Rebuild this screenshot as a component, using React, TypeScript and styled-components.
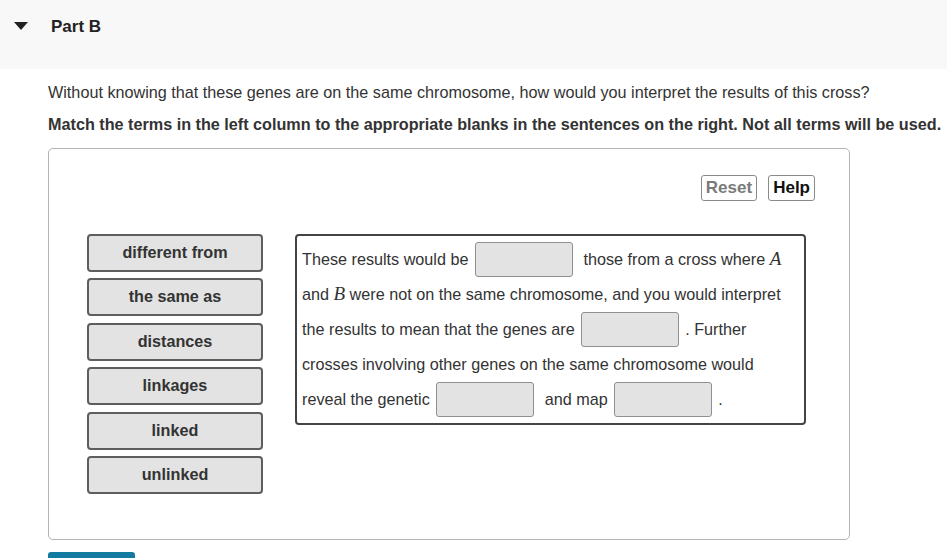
import React from "react";
import styled, { createGlobalStyle } from "styled-components";

const Global = createGlobalStyle`
  html, body { margin: 0; padding: 0; background: #fff; }
  body { font-family: "Liberation Sans", Arial, sans-serif; color: #333; }
`;

const Header = styled.div`
  height: 69px;
  background: #f8f8f8;
  display: flex;
  align-items: flex-start;
  padding-top: 17px;
  box-sizing: border-box;
`;

const Caret = styled.span`
  width: 0;
  height: 0;
  margin: 5px 0 0 14px;
  border-left: 7px solid transparent;
  border-right: 7px solid transparent;
  border-top: 8px solid #222;
`;

const PartTitle = styled.h2`
  margin: 0 0 0 23px;
  font-size: 17px;
  font-weight: bold;
  color: #222;
  line-height: 19px;
`;

const Body = styled.div`
  padding: 14px 0 0 48px;
`;

const Question = styled.p`
  margin: 0;
  font-size: 16.2px;
  line-height: 18px;
  color: #333;
`;

const Instruction = styled.p`
  margin: 14px 0 0;
  font-size: 16.2px;
  line-height: 18px;
  font-weight: bold;
  color: #333;
  white-space: nowrap;
`;

const Panel = styled.div`
  margin-top: 15px;
  width: 802px;
  height: 392px;
  box-sizing: border-box;
  border: 1px solid #b3b3b3;
  border-radius: 5px;
  padding: 26px 34px 0 38px;
`;

const Toolbar = styled.div`
  display: flex;
  justify-content: flex-end;
  gap: 11px;
`;

const ToolButton = styled.button<{ $disabled?: boolean }>`
  font-family: "Liberation Sans", Arial, sans-serif;
  font-size: 17px;
  font-weight: bold;
  height: 26px;
  padding: 0 4px;
  background: #fff;
  border: 1px solid #8a8a8a;
  border-radius: 3px;
  color: ${(p) => (p.$disabled ? "#7a7a7a" : "#111")};
`;

const Workspace = styled.div`
  margin-top: 33px;
  display: flex;
  align-items: flex-start;
  gap: 32px;
`;

const Terms = styled.div`
  display: flex;
  flex-direction: column;
  gap: 6.4px;
`;

const Term = styled.div`
  width: 176px;
  height: 38px;
  box-sizing: border-box;
  border: 2px solid #5e5e5e;
  border-radius: 4px;
  background: #e3e3e3;
  display: flex;
  align-items: center;
  justify-content: center;
  font-size: 16.2px;
  font-weight: bold;
  color: #333;
  padding-bottom: 1px;
`;

const Sentence = styled.div`
  width: 511px;
  box-sizing: border-box;
  border: 2px solid #444;
  border-radius: 4px;
  padding: 6px 5px 6px 5px;
  font-size: 16.2px;
  color: #333;
`;

const Line = styled.div`
  height: 35px;
  line-height: 35px;
  white-space: nowrap;
`;

const Blank = styled.span`
  display: inline-block;
  width: 98px;
  height: 35px;
  box-sizing: border-box;
  border: 1px solid #8f8f8f;
  border-radius: 3px;
  background: #e3e3e3;
  vertical-align: top;
  margin: 0 6px 0 2px;
`;

const MathVar = styled.i`
  font-family: "Liberation Serif", "Times New Roman", serif;
  font-size: 19px;
  line-height: 1;
`;

const SubmitButton = styled.div`
  margin-top: 12px;
  width: 87px;
  height: 20px;
  background: #147ba0;
  border-radius: 3px 3px 0 0;
`;

const terms = ["different from", "the same as", "distances", "linkages", "linked", "unlinked"];

export default function App() {
  return (
    <>
      <Global />
      <Header>
        <Caret />
        <PartTitle>Part B</PartTitle>
      </Header>
      <Body>
        <Question>
          Without knowing that these genes are on the same chromosome, how would you interpret the results of this cross?
        </Question>
        <Instruction>
          Match the terms in the left column to the appropriate blanks in the sentences on the right. Not all terms will be used.
        </Instruction>
        <Panel>
          <Toolbar>
            <ToolButton $disabled>Reset</ToolButton>
            <ToolButton>Help</ToolButton>
          </Toolbar>
          <Workspace>
            <Terms>
              {terms.map((t) => (
                <Term key={t}>{t}</Term>
              ))}
            </Terms>
            <Sentence>
              <Line>
                These results would be <Blank /> those from a cross where <MathVar>A</MathVar>
              </Line>
              <Line>
                and <MathVar>B</MathVar> were not on the same chromosome, and you would interpret
              </Line>
              <Line>
                the results to mean that the genes are <Blank />. Further
              </Line>
              <Line>crosses involving other genes on the same chromosome would</Line>
              <Line>
                reveal the genetic <Blank /> and map <Blank />.
              </Line>
            </Sentence>
          </Workspace>
        </Panel>
        <SubmitButton />
      </Body>
    </>
  );
}
